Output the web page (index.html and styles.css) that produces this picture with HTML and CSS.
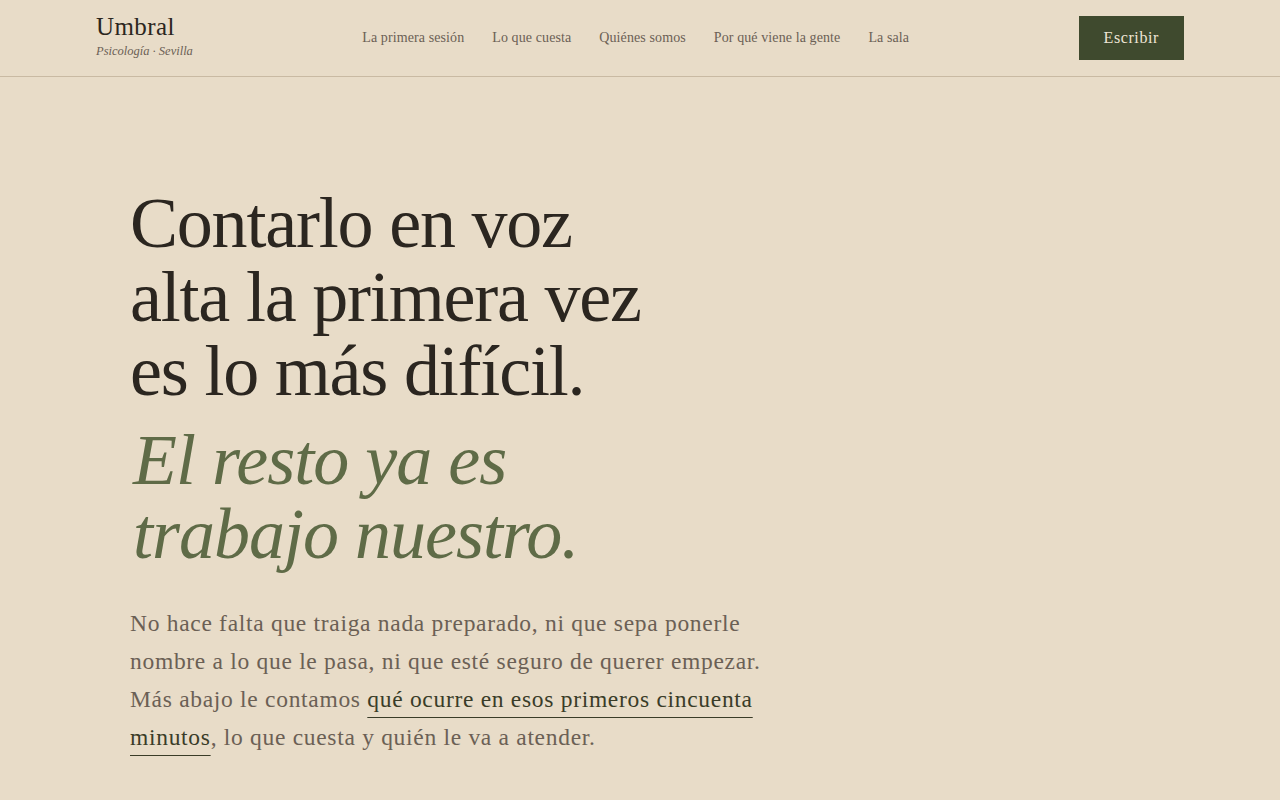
FILE: index.html
```html
<!DOCTYPE html>
<html lang="es">
<head>
<meta charset="utf-8">
<title>Umbral · Psicología · Sevilla</title>
<link rel="stylesheet" href="styles.css">
</head>
<body>
<header class="site-header">
  <a class="brand" href="#">
    <span class="brand-name">Umbral</span>
    <span class="brand-sub">Psicología · Sevilla</span>
  </a>
  <nav class="nav">
    <a href="#">La primera sesión</a>
    <a href="#">Lo que cuesta</a>
    <a href="#">Quiénes somos</a>
    <a href="#">Por qué viene la gente</a>
    <a href="#">La sala</a>
  </nav>
  <a class="cta" href="#">Escribir</a>
</header>
<main class="hero">
  <h1 class="hero-title">Contarlo en voz<br>alta la primera vez<br>es lo más difícil.</h1>
  <p class="hero-accent">El resto ya es<br>trabajo nuestro.</p>
  <p class="hero-text">No hace falta que traiga nada preparado, ni que sepa ponerle<br>nombre a lo que le pasa, ni que esté seguro de querer empezar.<br>Más abajo le contamos <a href="#">qué ocurre en esos primeros cincuenta<br>minutos</a>, lo que cuesta y quién le va a atender.</p>
</main>
</body>
</html>
```
FILE: styles.css
```css
* { box-sizing: border-box; }
html, body { margin: 0; padding: 0; }
body {
  background: #e8dcc8;
  color: #2b2620;
  font-family: "Liberation Serif", "DejaVu Serif", serif;
  height: 800px;
  overflow: hidden;
}
a { color: inherit; text-decoration: none; }

.site-header {
  height: 77px;
  padding: 0 96px;
  display: flex;
  align-items: center;
  justify-content: space-between;
  border-bottom: 1px solid #c9baa3;
}
.brand { display: flex; flex-direction: column; margin-top: -3px; }
.brand-name {
  font-size: 25px;
  line-height: 28px;
  color: #2b2620;
  letter-spacing: 0.4px;
}
.brand-sub {
  font-size: 12.5px;
  line-height: 18px;
  font-style: italic;
  color: #6b6055;
  margin-top: 1px;
}
.nav { display: flex; gap: 28px; }
.nav a { font-size: 14px; letter-spacing: 0.1px; color: #6b6055; }
.cta {
  display: flex;
  align-items: center;
  height: 44px;
  padding: 0 25px;
  background: #3f4a2e;
  color: #efe6d6;
  font-size: 16px;
  letter-spacing: 0.6px;
}

.hero {
  max-width: 1020px;
  margin: 0 auto;
  padding-top: 109px;
}
.hero-title {
  margin: 0;
  font-weight: 400;
  font-size: 72px;
  line-height: 74px;
  letter-spacing: -1.2px;
  color: #2b2620;
}
.hero-accent {
  margin: 15px 0 0;
  font-style: italic;
  font-size: 72px;
  line-height: 74px;
  letter-spacing: -1px;
  color: #5f6b47;
  padding-left: 3px;
}
.hero-text {
  margin: 33px 0 0;
  font-size: 23.5px;
  line-height: 38px;
  letter-spacing: 0.7px;
  color: #6b6055;
  white-space: nowrap;
}
.hero-text a {
  color: #3a3c28;
  text-decoration: underline;
  text-decoration-color: #3a3c28;
  text-decoration-thickness: 1px;
  text-underline-offset: 10px;
}
```
